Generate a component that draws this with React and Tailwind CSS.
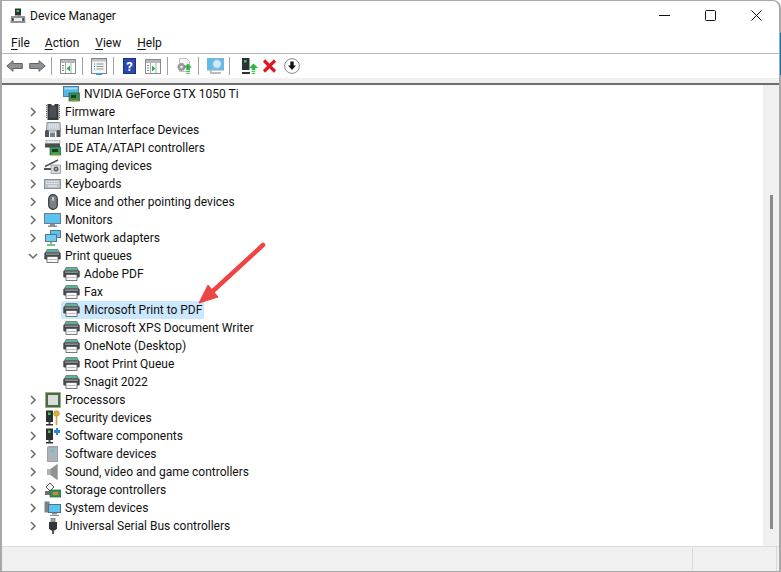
// App.jsx - Device Manager window
import React from "react";

const font = { fontFamily: 'Roboto, "Noto Sans", sans-serif' };

function Chevron({ open }) {
  return (
    <svg width="10" height="10" viewBox="0 0 10 10" fill="none" stroke="#6b6b6b" strokeWidth="1.500">
      {open ? <path d="M1 3l4 4 4-4" /> : <path d="M3 1l4 4-4 4" />}
    </svg>
  );
}

// --- tree icons ---
const PrinterIcon = () => (
  <svg width="17" height="14" viewBox="0 0 17 14">
    <path d="M3 .5h11l1.500 3h-14z" fill="#62b09a" stroke="#4a5a56" strokeWidth="0.600" />
    <rect x="0.300" y="3.500" width="16.400" height="7" rx="1.200" fill="#43474c" />
    <rect x="2" y="4.500" width="13" height="1.300" fill="#9a9ea3" />
    <rect x="3" y="7.500" width="11" height="6" fill="#f7f7f7" stroke="#55595d" strokeWidth="0.800" />
    <rect x="4.500" y="10" width="8" height="1" fill="#bdbdbd" />
  </svg>
);

const GpuIcon = () => (
  <svg width="17" height="16" viewBox="0 0 17 16">
    <rect x="0.500" y="0.500" width="15" height="10" fill="#53b7e8" stroke="#4d7e99" />
    <rect x="1.500" y="1.500" width="13" height="2" fill="#9edbf6" />
    <rect x="6" y="7" width="10.500" height="8" fill="#3e8f55" stroke="#2d5d3a" strokeWidth="0.700" />
    <rect x="8" y="9" width="5" height="3" fill="#1d3d26" />
    <path d="M7 15h9" stroke="#d2b33f" strokeWidth="1" />
  </svg>
);

const ChipIcon = () => (
  <svg width="14" height="16" viewBox="0 0 14 16">
    <path d="M1.500 0h3.500l1 1.500h2L9 0h3.500v16h-11z" fill="#34373a" />
    <path d="M3.500 2.500h7v11h-7z" fill="#4c5054" />
    <path d="M.5 1v14M13.500 1v14" stroke="#55585b" strokeDasharray="1 1" />
  </svg>
);

const HidIcon = () => (
  <svg width="17" height="16" viewBox="0 0 17 16">
    <path d="M3 .5h13l.5 8.500h-14z" fill="#c9d1da" stroke="#8d9296" />
    <path d="M5 3h9M5 5h9" stroke="#f2f4f6" strokeDasharray="1 1" />
    <path d="M1 15V9.500c0-1 1-1.500 2-1.500s2 .5 2 1.500V15z" fill="#4d5358" />
    <path d="M12.500 15V9.500c0-1 .8-1.500 1.800-1.500s2.200.5 2.200 1.500V15z" fill="#4d5358" />
    <path d="M6 15v-4.500h5V15z" fill="#7d8287" />
    <path d="M8 11.500h1v2H8z" fill="#3a80c8" />
  </svg>
);

const IdeIcon = () => (
  <svg width="16" height="16" viewBox="0 0 16 16">
    <rect x="1" y="0.500" width="14" height="3" fill="#e4e6e8" stroke="#9a9a9a" strokeWidth="0.600" />
    <rect x="0" y="3.500" width="15" height="4" fill="#4a4e52" />
    <rect x="5" y="7" width="11" height="8" fill="#3e9a5a" stroke="#2d5d3a" strokeWidth="0.700" />
    <rect x="7" y="9" width="6" height="3" fill="#1d3d26" />
    <path d="M6 15h9" stroke="#d2b33f" />
  </svg>
);

const CameraIcon = () => (
  <svg width="17" height="15" viewBox="0 0 17 15">
    <path d="M1 7.500L14 1" stroke="#4d5054" strokeWidth="1.400" />
    <path d="M0 9h7v2H0z" fill="#4f5357" />
    <rect x="7" y="6" width="9.500" height="8.500" fill="#d9dadb" stroke="#85888b" strokeWidth="0.700" />
    <circle cx="12" cy="10" r="2.500" fill="#5a5f63" />
    <circle cx="12" cy="10" r="1" fill="#a9c8da" />
  </svg>
);

const KeyboardIcon = () => (
  <svg width="17" height="10" viewBox="0 0 17 10">
    <rect x="0.500" y="0.500" width="16" height="9" fill="#b9c0c7" stroke="#8b9096" />
    <path d="M2 2.500h13M2 4.500h13" stroke="#f4f6f7" strokeDasharray="1 .6" />
    <path d="M4 7h9" stroke="#f4f6f7" />
  </svg>
);

const MouseIcon = () => (
  <svg width="10" height="16" viewBox="0 0 10 16">
    <rect x="0.700" y="0.700" width="8.600" height="14.600" rx="4.300" fill="#7b8085" stroke="#34373a" strokeWidth="1.200" />
    <rect x="4" y="3" width="2" height="4" rx="1" fill="#c9cdd0" />
  </svg>
);

const MonitorIcon = () => (
  <svg width="17" height="14" viewBox="0 0 17 14">
    <rect x="0.500" y="0.500" width="16" height="10" fill="#5cc2ef" stroke="#6c7d88" />
    <path d="M6 11h5v1.500h2V14H4v-1.500h2z" fill="#8a9096" />
  </svg>
);

const NetworkIcon = () => (
  <svg width="16" height="16" viewBox="0 0 16 16">
    <rect x="5.500" y="0.500" width="10" height="7" fill="#5cc2ef" stroke="#5d7482" />
    <rect x="0.500" y="4.500" width="11" height="7" fill="#6dccf4" stroke="#5d7482" />
    <path d="M6 11.500V14M2 15h8" stroke="#4fae5c" strokeWidth="1.600" />
  </svg>
);

const CpuIcon = () => (
  <svg width="16" height="16" viewBox="0 0 16 16">
    <rect x="0.500" y="0.500" width="15" height="15" fill="#3f6f4e" stroke="#b59c4a" strokeDasharray="1 .7" />
    <rect x="3" y="3" width="10" height="10" fill="#d9dcd9" />
  </svg>
);

const TowerGlyph = () => (
  <>
    <rect x="1" y="0.500" width="7" height="11.500" fill="#2e3134" />
    <rect x="3" y="2.500" width="2.500" height="2.500" fill="#35d04a" />
    <path d="M1 14h7v1.500H1z" fill="#2e3134" />
    <rect x="3.500" y="12" width="2" height="2" fill="#55595c" />
  </>
);

const SecurityIcon = () => (
  <svg width="15" height="16" viewBox="0 0 15 16">
    <TowerGlyph />
    <circle cx="11.500" cy="3.500" r="2.800" fill="#e2b23f" stroke="#a87f20" strokeWidth="0.600" />
    <path d="M10.700 6h1.600v8.500l-.8 1-.8-1z" fill="#d9a52f" />
  </svg>
);

const ComponentIcon = () => (
  <svg width="15" height="16" viewBox="0 0 15 16">
    <TowerGlyph />
    <path d="M9 2h2V0h2v2h2v3h-2v2h-2V5H9z" fill="#2b86e0" />
  </svg>
);

const SoftwareDeviceIcon = () => (
  <svg width="11" height="16" viewBox="0 0 11 16">
    <path d="M0 1l2-1h9v16H0z" fill="#9da2a8" />
    <path d="M1 1.500h9V15H1z" fill="#adb3b8" />
    <circle cx="5.500" cy="5" r="1.300" fill="#35d4e6" />
  </svg>
);

const SpeakerIcon = () => (
  <svg width="11" height="16" viewBox="0 0 11 16">
    <path d="M0 5h3.500L10.500 0v16L3.500 11H0z" fill="#b0b3b6" />
    <path d="M3.500 5L10.500 0v16L3.500 11z" fill="#8e9295" />
  </svg>
);

const StorageIcon = () => (
  <svg width="16" height="16" viewBox="0 0 16 16">
    <path d="M5 1L1 5l4 4 4-4z" fill="#f2f2f2" stroke="#55595c" />
    <path d="M0 9h5v4H0z" fill="#6b7074" />
    <rect x="5" y="8" width="11" height="7" fill="#3e8f55" stroke="#2d5d3a" strokeWidth="0.700" />
    <rect x="8" y="10" width="5" height="3" fill="#c58b2e" />
  </svg>
);

const SystemIcon = () => (
  <svg width="17" height="15" viewBox="0 0 17 15">
    <rect x="0.500" y="0.500" width="5" height="11" fill="#7d8287" />
    <rect x="4.500" y="3.500" width="12" height="8" fill="#5cc2ef" stroke="#55707f" />
    <path d="M8 12h5v1.500H8z" fill="#8a9096" />
    <path d="M6 14.500h9" stroke="#8a9096" />
  </svg>
);

const UsbIcon = () => (
  <svg width="10" height="16" viewBox="0 0 10 16">
    <path d="M3 0h4v4H3z" fill="#a3a6a9" stroke="#5d6063" strokeWidth="0.600" />
    <path d="M1 4h8v6.500L7 12.500H3L1 10.500z" fill="#34373a" />
    <path d="M4 12h2v4H4z" fill="#55585b" />
  </svg>
);

// rows of the device tree
const rows = [
  { label: "NVIDIA GeForce GTX 1050 Ti", icon: GpuIcon, child: true },
  { label: "Firmware", icon: ChipIcon },
  { label: "Human Interface Devices", icon: HidIcon },
  { label: "IDE ATA/ATAPI controllers", icon: IdeIcon },
  { label: "Imaging devices", icon: CameraIcon },
  { label: "Keyboards", icon: KeyboardIcon },
  { label: "Mice and other pointing devices", icon: MouseIcon },
  { label: "Monitors", icon: MonitorIcon },
  { label: "Network adapters", icon: NetworkIcon },
  { label: "Print queues", icon: PrinterIcon, open: true },
  { label: "Adobe PDF", icon: PrinterIcon, child: true },
  { label: "Fax", icon: PrinterIcon, child: true },
  { label: "Microsoft Print to PDF", icon: PrinterIcon, child: true, selected: true },
  { label: "Microsoft XPS Document Writer", icon: PrinterIcon, child: true },
  { label: "OneNote (Desktop)", icon: PrinterIcon, child: true },
  { label: "Root Print Queue", icon: PrinterIcon, child: true },
  { label: "Snagit 2022", icon: PrinterIcon, child: true },
  { label: "Processors", icon: CpuIcon },
  { label: "Security devices", icon: SecurityIcon },
  { label: "Software components", icon: ComponentIcon },
  { label: "Software devices", icon: SoftwareDeviceIcon },
  { label: "Sound, video and game controllers", icon: SpeakerIcon },
  { label: "Storage controllers", icon: StorageIcon },
  { label: "System devices", icon: SystemIcon },
  { label: "Universal Serial Bus controllers", icon: UsbIcon },
];

function TreeRow({ row }) {
  const Icon = row.icon;
  if (row.child) {
    return (
      <div className="h-[18px] flex items-center pl-[59px]">
        <div className={`h-[18px] flex items-center pl-[2px] pr-[2px] rounded-[2px] ${row.selected ? "bg-[#cce8ff]" : ""}`}>
          <span className="w-[17px] flex justify-center shrink-0"><Icon /></span>
          <span className="ml-[4px] whitespace-nowrap">{row.label}</span>
        </div>
      </div>
    );
  }
  return (
    <div className="h-[18px] flex items-center pl-[26px]">
      <span className="w-[10px] flex justify-center shrink-0"><Chevron open={row.open} /></span>
      <span className="ml-[6px] w-[17px] flex justify-center shrink-0"><Icon /></span>
      <span className="ml-[4px] whitespace-nowrap">{row.label}</span>
    </div>
  );
}

// --- toolbar icons ---
const BackIcon = ({ flip }) => (
  <svg width="17" height="12" viewBox="0 0 17 12" className={flip ? "block -scale-x-100" : "block"}>
    <path d="M7 .7L.8 6 7 11.300V8.500h9.300v-5H7z" fill="#8f9294" stroke="#5f6264" />
  </svg>
);

const Sep = () => <div className="w-px h-[18px] bg-[#a0a0a0] shrink-0" />;

const PaneIcon = ({ right }) => (
  <svg width="16" height="15" viewBox="0 0 16 15" className="block">
    <rect x="0.500" y="0.500" width="15" height="14" fill="#fff" stroke="#858b90" />
    <rect x="1" y="1" width="14" height="3" fill="#b3b8bc" />
    <path d="M5.500 4v10M11 4v10" stroke="#a9aeb2" />
    {right ? <path d="M7 6.500l3.500 3-3.500 3z" fill="#2fae45" /> : <path d="M10 6.500l-3.500 3 3.500 3z" fill="#2fae45" />}
    <path d="M2 6.500h2M2 9h2M2 11.500h2" stroke="#7d8286" />
  </svg>
);

const PropsIcon = () => (
  <svg width="16" height="17" viewBox="0 0 16 17" className="block">
    <rect x="0.500" y="0.500" width="15" height="15" fill="#f4f5f6" stroke="#7e8488" />
    <rect x="1" y="1" width="14" height="2.500" fill="#c0c4c8" />
    <path d="M3 6h1M3 8.500h1M3 11h1" stroke="#2b8fd8" />
    <path d="M5.500 6h7M5.500 8.500h7M5.500 11h7" stroke="#8e9498" />
    <rect x="5" y="15.500" width="6" height="1.500" fill="#2ba7e0" />
  </svg>
);

const HelpIcon = () => (
  <div className="w-[13px] h-[16px] bg-[#2a48b0] border border-[#1d3080] flex items-center justify-center text-white text-[13px] font-bold leading-none">?</div>
);

const GearDocIcon = () => (
  <svg width="16" height="16" viewBox="0 0 16 16" className="block">
    <path d="M3.500.5h7l3 3v10h-10z" fill="#f5f5f5" stroke="#c4c4c4" />
    <circle cx="5.500" cy="9" r="3.600" fill="#9a9d9f" stroke="#7b7e80" strokeDasharray="1.500 1" />
    <circle cx="5.500" cy="9" r="1.300" fill="#eee" />
    <path d="M12 5.500l4 4h-2.300V12h-3.400V9.500H8z" fill="#2fb344" />
    <path d="M10.300 13.300h3.400M10.300 15.300h3.400" stroke="#2fb344" />
  </svg>
);

const ScanIcon = () => (
  <svg width="17" height="16" viewBox="0 0 17 16" className="block">
    <rect x="0.500" y="0.500" width="16" height="11.500" fill="#5cbdec" stroke="#7fb2d0" />
    <path d="M3 15h11" stroke="#8b8f92" strokeWidth="1.200" />
    <circle cx="10" cy="6" r="4.200" fill="#cfeaf8" stroke="#a3c3d4" strokeWidth="1" />
    <path d="M7 9.500l-4 4.500" stroke="#b0b5b9" strokeWidth="1.600" />
  </svg>
);

const UpdateIcon = () => (
  <svg width="17" height="16" viewBox="0 0 17 16" className="block">
    <rect x="1" y="0" width="7.500" height="12" fill="#2e3134" />
    <rect x="3" y="2" width="2.500" height="2.500" fill="#35d04a" />
    <path d="M1 14h8v2H1z" fill="#2e3134" />
    <path d="M12.500 5.500l4.500 4.500h-2.700v2h-3.600v-2H8z" fill="#2fb344" />
    <path d="M10.700 13.300h3.600M10.700 15.300h3.600" stroke="#2fb344" />
  </svg>
);

const RemoveIcon = () => (
  <svg width="15" height="14" viewBox="0 0 15 14" className="block">
    <path d="M2 1.500l11 11M13 1.500l-11 11" stroke="#e01622" strokeWidth="3.200" />
  </svg>
);

const DownIcon = () => (
  <svg width="16" height="16" viewBox="0 0 16 16" className="block">
    <circle cx="8" cy="8" r="7.400" fill="#fff" stroke="#8a8a8a" />
    <path d="M6.300 3.500h3.400v4H12L8 12 4 7.500h2.300z" fill="#111" />
  </svg>
);

function MenuItem({ first, rest, className }) {
  return (
    <span className={className}>
      <span className="underline underline-offset-2">{first}</span>
      {rest}
    </span>
  );
}

export default function App() {
  return (
    <div className="relative w-[781px] h-[572px] bg-white overflow-hidden text-[12px] text-[#111]" style={font}>
      <div className="h-full flex flex-col border-t border-l-2 border-r-2 border-b border-[#a8a8a8] rounded-tr-[8px]">
        {/* Title bar */}
        <div className="h-[31px] pb-[2px] flex items-center shrink-0">
          <svg width="16" height="16" viewBox="0 0 16 16" className="ml-[8px]">
            <rect x="5" y="0.500" width="6" height="7" fill="#2e3134" />
            <rect x="6.500" y="2" width="2.500" height="2" fill="#35d04a" />
            <path d="M1 8h14l.5 7H.5z" fill="#8d9194" />
            <rect x="4" y="10" width="8" height="3" fill="#eee" />
            <rect x="2" y="10.500" width="1.500" height="2" fill="#333" />
            <rect x="12.500" y="10.500" width="1.500" height="2" fill="#333" />
          </svg>
          <span className="ml-[4px]">Device Manager</span>
          <div className="ml-auto flex items-center">
            <div className="w-[46px] flex justify-center">
              <svg width="11" height="11" viewBox="0 0 11 11"><path d="M0 5.500h11" stroke="#111" /></svg>
            </div>
            <div className="w-[46px] flex justify-center">
              <svg width="11" height="11" viewBox="0 0 11 11"><rect x="0.500" y="0.500" width="10" height="10" rx="1" fill="none" stroke="#111" /></svg>
            </div>
            <div className="w-[46px] flex justify-center">
              <svg width="11" height="11" viewBox="0 0 11 11"><path d="M.5.500l10 10M10.500.500l-10 10" stroke="#111" /></svg>
            </div>
          </div>
        </div>

        {/* Menu */}
        <div className="h-[22px] flex items-center shrink-0 border-b border-[#b4b4c0] pl-[9px]">
          <MenuItem first="F" rest="ile" />
          <MenuItem first="A" rest="ction" className="ml-[15px]" />
          <MenuItem first="V" rest="iew" className="ml-[16px]" />
          <MenuItem first="H" rest="elp" className="ml-[16px]" />
        </div>

        {/* Toolbar */}
        <div className="h-[24px] flex items-center shrink-0">
          <span className="ml-[4px]"><BackIcon /></span>
          <span className="ml-[6px]"><BackIcon flip /></span>
          <span className="ml-[5px]"><Sep /></span>
          <span className="ml-[8px]"><PaneIcon /></span>
          <span className="ml-[6px]"><Sep /></span>
          <span className="ml-[8px]"><PropsIcon /></span>
          <span className="ml-[6px]"><Sep /></span>
          <span className="ml-[9px]"><HelpIcon /></span>
          <span className="ml-[9px]"><PaneIcon right /></span>
          <span className="ml-[6px]"><Sep /></span>
          <span className="ml-[8px]"><GearDocIcon /></span>
          <span className="ml-[6px]"><Sep /></span>
          <span className="ml-[8px]"><ScanIcon /></span>
          <span className="ml-[5px]"><Sep /></span>
          <span className="ml-[11px]"><UpdateIcon /></span>
          <span className="ml-[4px]"><RemoveIcon /></span>
          <span className="ml-[7px]"><DownIcon /></span>
        </div>

        {/* Tree area */}
        <div className="flex-1 min-h-0 flex flex-col bg-[#f0f0f0] pt-[5px]">
          <div className="flex-1 min-h-0 flex bg-white border-t-2 border-[#6e6e6e] border-b border-b-[#dcdcdc]">
            <div className="flex-1 min-w-0 overflow-hidden">
              {rows.map((row) => <TreeRow key={row.label} row={row} />)}
            </div>
            <div className="w-[16px] bg-[#f0f0f0] shrink-0 flex justify-center pt-[110px] pb-[17px]">
              <div className="w-[3px] h-full bg-[#8a8a8a]" />
            </div>
          </div>
          {/* Status bar */}
          <div className="h-[24px] shrink-0 flex bg-[#f0f0f0]">
            <div className="flex-1" />
            <div className="w-px bg-[#d9d9d9] my-[1px]" />
            <div className="w-[84px] border-r border-[#d9d9d9]" />
            <div className="w-[2px]" />
          </div>
        </div>
      </div>

      {/* sliver of the desktop behind the window */}
      <div className="absolute right-0 top-[33px] w-px h-[42px] bg-[#0078b4]" />

      {/* red annotation arrow over the tree */}
      <svg className="absolute left-[196px] top-[240px]" width="70" height="70" viewBox="0 0 70 70">
        <path d="M67 5L17 51" stroke="#ef4444" strokeWidth="4.500" strokeLinecap="round" />
        <path d="M3 63L12 45 22 57z" fill="#ef4444" stroke="#ef4444" strokeLinejoin="round" />
      </svg>
    </div>
  );
}
